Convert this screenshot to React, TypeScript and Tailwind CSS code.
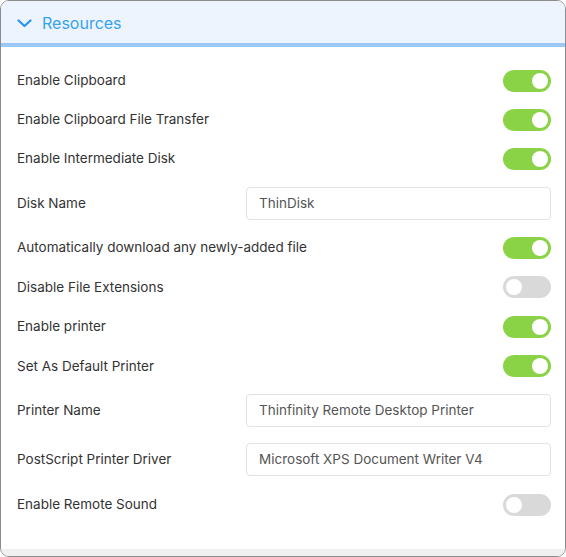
import React from "react";

type Row =
  | { label: string; kind: "toggle"; on: boolean; h: string }
  | { label: string; kind: "input"; value: string; pad: string };

const rows: Row[] = [
  { label: "Enable Clipboard", kind: "toggle", on: true, h: "h-[39px]" },
  { label: "Enable Clipboard File Transfer", kind: "toggle", on: true, h: "h-[39px]" },
  { label: "Enable Intermediate Disk", kind: "toggle", on: true, h: "h-[39px]" },
  { label: "Disk Name", kind: "input", value: "ThinDisk", pad: "pt-[9px] pb-[8px]" },
  { label: "Automatically download any newly-added file", kind: "toggle", on: true, h: "h-[39px]" },
  { label: "Disable File Extensions", kind: "toggle", on: false, h: "h-[40px]" },
  { label: "Enable printer", kind: "toggle", on: true, h: "h-[39px]" },
  { label: "Set As Default Printer", kind: "toggle", on: true, h: "h-[40px]" },
  { label: "Printer Name", kind: "input", value: "Thinfinity Remote Desktop Printer", pad: "pt-[8px] pb-[8px]" },
  { label: "PostScript Printer Driver", kind: "input", value: "Microsoft XPS Document Writer V4", pad: "pt-[8px] pb-[9px]" },
  { label: "Enable Remote Sound", kind: "toggle", on: false, h: "h-[39px]" },
];

const Toggle = ({ on }: { on: boolean }) => (
  <div
    className={`w-[48px] h-[22px] rounded-full flex items-center px-[3px] ${
      on ? "bg-[#8bd346] justify-end" : "bg-[#d9d9d9] justify-start"
    }`}
  >
    <div className="w-[16px] h-[16px] rounded-full bg-white" />
  </div>
);

export default function App() {
  return (
    <div
      className="w-[566px] h-[557px] bg-white text-[#333] overflow-hidden"
      style={{ fontFamily: "Inter, 'Noto Sans', sans-serif" }}
    >
      <div className="w-full h-full border border-[#8c8c8c] rounded-[9px] overflow-hidden flex flex-col">
        <div className="h-[46px] shrink-0 bg-[#eef4fd] flex items-center pl-[16px] pt-[1px] gap-[10px] border-b-[4px] border-[#9cc8f6]">
          <svg width="15" height="9" viewBox="0 0 15 9" fill="none" className="mt-[1px]">
            <path d="M1.5 1.5 L7.5 7 L13.5 1.5" stroke="#2196f3" strokeWidth="2.2" strokeLinecap="round" strokeLinejoin="round" />
          </svg>
          <span className="text-[16px] text-[#33a3f0]">Resources</span>
        </div>
        <div className="flex-1 flex flex-col pt-[14px] pl-[16px] pr-[14px]">
          {rows.map((r) =>
            r.kind === "toggle" ? (
              <div key={r.label} className={`${r.h} flex items-center justify-between shrink-0`}>
                <span className="text-[13.5px] text-[#333]">{r.label}</span>
                <Toggle on={r.on} />
              </div>
            ) : (
              <div key={r.label} className={`${r.pad} flex items-center justify-between shrink-0`}>
                <span className="text-[13.5px] text-[#333]">{r.label}</span>
                <div className="w-[305px] h-[33px] border border-[#e2e2e2] rounded-[4px] flex items-center px-[12px] text-[13.5px] text-[#555]">
                  {r.value}
                </div>
              </div>
            )
          )}
        </div>
        <div className="h-[7px] shrink-0 bg-[#f0f0f0]" />
      </div>
    </div>
  );
}
